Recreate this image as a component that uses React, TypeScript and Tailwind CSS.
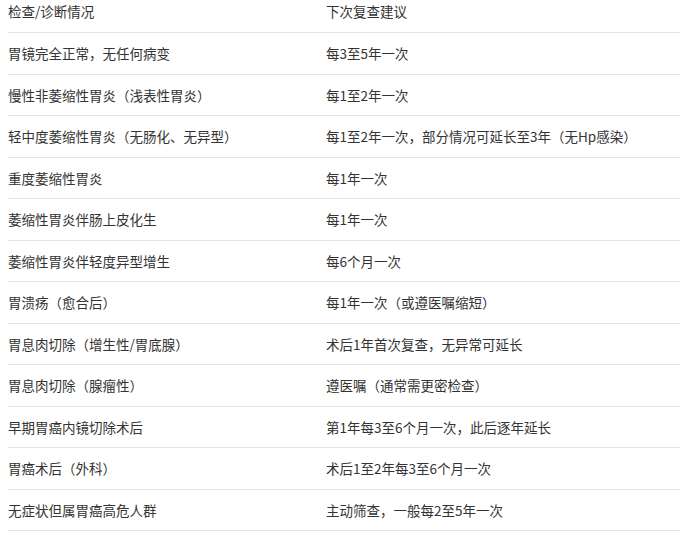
const rows: [string, string][] = [
  ['胃镜完全正常，无任何病变', '每3至5年一次'],
  ['慢性非萎缩性胃炎（浅表性胃炎）', '每1至2年一次'],
  ['轻中度萎缩性胃炎（无肠化、无异型）', '每1至2年一次，部分情况可延长至3年（无Hp感染）'],
  ['重度萎缩性胃炎', '每1年一次'],
  ['萎缩性胃炎伴肠上皮化生', '每1年一次'],
  ['萎缩性胃炎伴轻度异型增生', '每6个月一次'],
  ['胃溃疡（愈合后）', '每1年一次（或遵医嘱缩短）'],
  ['胃息肉切除（增生性/胃底腺）', '术后1年首次复查，无异常可延长'],
  ['胃息肉切除（腺瘤性）', '遵医嘱（通常需更密检查）'],
  ['早期胃癌内镜切除术后', '第1年每3至6个月一次，此后逐年延长'],
  ['胃癌术后（外科）', '术后1至2年每3至6个月一次'],
  ['无症状但属胃癌高危人群', '主动筛查，一般每2至5年一次'],
]

export default function App() {
  return (
    <div
      className="w-[680px] h-[535px] overflow-hidden bg-white pl-2 text-[13.5px] text-[#333]"
      style={{ fontFamily: '"Microsoft YaHei", "Noto Sans CJK SC", sans-serif' }}
    >
      {/* Header */}
      <div className="grid grid-cols-[318px_1fr] h-[33px] pb-[9px] items-center border-b border-[#e5e5e5]">
        <div>检查/诊断情况</div>
        <div>下次复查建议</div>
      </div>

      {rows.map(([cond, advice], i) => (
        <div
          key={i}
          className="grid grid-cols-[318px_1fr] h-[41.5px] items-center border-b border-[#e5e5e5]"
        >
          <div className="whitespace-nowrap">{cond}</div>
          <div className="whitespace-nowrap">{advice}</div>
        </div>
      ))}
    </div>
  )
}
